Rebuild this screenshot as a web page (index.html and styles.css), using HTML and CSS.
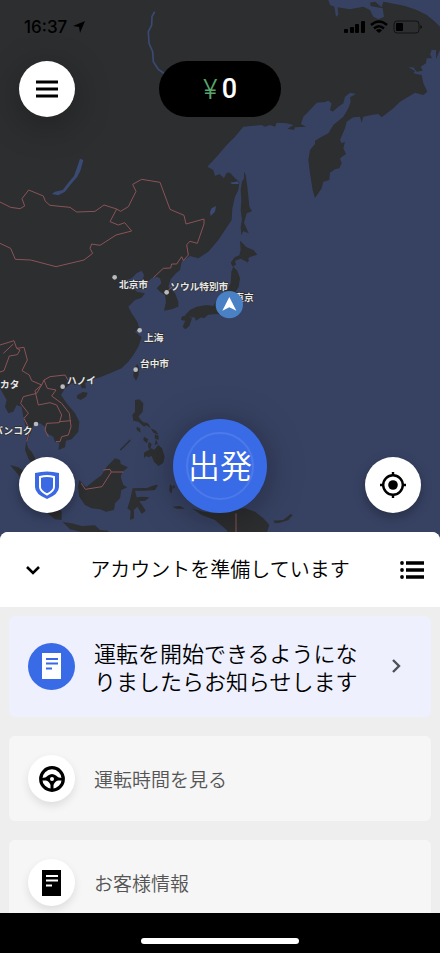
FILE: index.html
```html
<!DOCTYPE html>
<html lang="ja">
<head>
    <meta charset="UTF-8">
    <meta name="viewport" content="width=device-width, initial-scale=1.0">
    <title>ドライバー</title>
    <link rel="stylesheet" href="styles.css">
</head>
<body>
    <div class="screen">
        <main class="map">
            <svg class="map-canvas" viewBox="0 0 1320 1630" preserveAspectRatio="xMidYMin slice" aria-hidden="true">
                <!-- Mainland -->
                <path class="land" d="M0 0H985L990 15 1003 20 1008 50 1015 45 1013 22 1050 28 1090 20 1110 30 1120 50 1135 58 1152 50 1148 25 1130 22 1112 18 1110 8 1125 5 1145 22 1150 5 1185 12 1215 18 1250 30 1280 45 1305 65 1320 80V150L1308 178 1308 150 1295 150 1290 163 1296 175 1280 175 1278 190 1262 200 1268 212 1250 215 1240 202 1225 202 1245 213 1240 220 1265 225 1270 250 1282 275 1270 285 1245 278 1225 290 1200 305 1180 325 1145 352 1135 342 1115 345 1090 350 1085 368 1080 350 1060 352 1040 365 1035 385 1020 420 1025 430 1035 425 1030 445 1038 462 1020 475 1025 490 1018 505 1005 508 990 518 988 540 970 545 965 565 945 594 938 570 930 520 925 480 930 450 945 432 945 422 965 410 985 400 1000 375 1030 350 1045 325 1052 305 1050 292 1068 282 1050 278 1035 290 1030 310 1015 320 998 335 990 330 995 310 985 302 975 306 950 308 930 330 910 350 903 372 918 380 885 382 882 390 862 386 880 375 860 370 830 368 825 380 810 375 795 380 785 375 730 380 705 410 680 435 650 470 622 500 640 510 645 528 658 522 672 534 680 518 690 518 705 535 718 545 715 570 705 590 697 625 695 660 675 690 655 720 625 755 595 775 570 768 545 785 540 810 528 820 512 838 505 860 525 880 535 905 535 920 515 928 492 932 498 905 495 885 480 875 470 865 484 850 480 835 470 830 455 835 440 848 425 850 432 825 425 812 410 820 395 835 380 840 382 858 400 862 410 875 435 880 425 893 405 900 385 920 395 940 412 965 418 985 405 995 425 1012 415 1040 400 1065 385 1085 365 1105 330 1120 300 1132 270 1140 255 1150 258 1165 245 1165 240 1148 215 1150 195 1165 183 1185 200 1210 225 1240 238 1265 235 1295 215 1318 198 1322 195 1342 175 1350 178 1330 165 1325 160 1310 140 1300 135 1280 120 1270 100 1275 92 1300 80 1330 85 1345 95 1355 105 1375 115 1400 100 1400 85 1375 75 1350 78 1330 82 1300 70 1250 65 1220 50 1215 40 1235 25 1240 15 1220 20 1200 0 1165Z"/>
                <!-- Sakhalin, Hokkaido -->
                <path class="land" d="M732 515 737 525 742 560 745 590 748 620 756 634 740 640 732 668 746 700 730 694 724 706 722 680 726 660 722 630 724 600 722 570 726 545 732 535ZM720 722 740 742 760 750 772 764 748 772 740 785 722 776 705 782 708 794 698 800 692 788 704 772 718 766 722 750Z"/>
                <!-- Honshu, Shikoku, Kyushu -->
                <path class="land" d="M700 800 712 812 720 835 716 860 704 880 700 900 690 925 672 945 650 942 625 944 612 955 596 950 575 952 555 945 570 930 590 920 620 915 640 918 650 900 665 890 680 870 692 850 694 815ZM735 778 748 780 742 788ZM582 948 600 936 612 942 600 954 588 962ZM545 950 560 945 576 955 568 978 556 988 548 980 556 962 543 960Z"/>
                <!-- Taiwan, Hainan, Luzon, Visayas, Mindanao -->
                <path class="land" d="M412 1092 418 1105 415 1128 408 1142 400 1128 402 1105ZM232 1185 248 1176 263 1178 258 1190 242 1200 230 1194ZM405 1200 418 1198 430 1210 428 1235 415 1250 425 1262 440 1275 432 1280 415 1265 400 1262 397 1245 405 1235ZM410 1280 420 1285 422 1298 410 1290ZM432 1265 446 1272 452 1285 438 1275ZM452 1285 468 1292 476 1304 460 1298ZM432 1310 445 1318 440 1330 430 1320ZM446 1325 455 1332 450 1350 444 1340ZM465 1302 476 1308 475 1320 464 1315ZM468 1318 474 1332 464 1335ZM390 1318 392 1322 362 1352 360 1348ZM432 1358 455 1345 462 1350 475 1335 486 1345 494 1370 490 1388 476 1398 462 1385 455 1368 445 1372 438 1368 432 1375Z"/>
                <!-- Borneo, Sulawesi -->
                <path class="land" d="M238 1440 258 1462 285 1440 305 1425 320 1400 345 1375 360 1380 362 1392 384 1402 368 1415 362 1430 370 1455 382 1462 364 1470 360 1495 345 1510 342 1530 318 1535 300 1528 275 1525 255 1515 238 1490 234 1460ZM398 1465 440 1464 468 1454 474 1456 465 1470 435 1472 405 1472 410 1492 430 1490 448 1492 436 1502 418 1504 428 1518 437 1532 425 1542 412 1520 402 1530 402 1555 390 1560 392 1532 382 1525 390 1500Z"/>
                <!-- Sumatra, Java, Moluccas, New Guinea -->
                <path class="land" d="M30 1395 55 1402 80 1420 120 1465 160 1510 185 1535 185 1560 165 1558 130 1530 90 1480 60 1430ZM188 1566 215 1570 245 1578 285 1576 300 1590 325 1592 325 1602 260 1600 210 1588ZM510 1452 518 1460 514 1482 508 1472ZM520 1455 526 1460 520 1466ZM518 1520 540 1518 555 1526 530 1526ZM575 1525 610 1535 650 1540 700 1528 735 1525 765 1535 790 1555 808 1575 800 1600 820 1630H660L690 1610 680 1590 645 1560 605 1545ZM820 1562 850 1560 872 1542 878 1545 865 1560 840 1568 825 1570Z"/>
                <!-- Lakes and rivers -->
                <path class="water" d="M240 476 250 480 242 510 232 530 215 550 195 575 175 586 155 582 165 575 188 570 205 548 222 528 232 500ZM635 625 648 618 645 635 632 648 630 635Z"/>
                <path class="river" d="M464 35 456 50 455 75 445 95 447 130 458 155 460 185 475 208 495 222"/>
                <path class="water" d="M690 548 715 544 716 552 696 552Z"/>
                <!-- National borders -->
                <g class="border">
                    <path d="M0 606 32 622 60 626 74 618 66 596 86 570 130 588 136 604 150 616 210 622 230 636 285 634 312 615 350 627 330 665 355 675 374 668 395 693 348 705 300 736 275 732 270 745 278 760 252 780 168 800 92 780 46 778 32 745 0 730"/>
                    <path d="M350 627 362 634 385 620 408 574 398 553 425 538 480 547 510 628 552 646 558 672 612 657 612 672 592 730 570 724 560 734 565 765 550 782 545 770 530 792 515 792 512 804 490 805 460 833M505 870 520 858"/>
                    <path d="M0 1035 42 1022 50 1045 72 1042 82 1080 66 1112 88 1125 95 1142 125 1155 132 1140 150 1130 195 1125 204 1140M10 1060 40 1032M50 1045 60 1050 52 1064 28 1068 12 1112 0 1116M125 1155 110 1180 70 1190 62 1210 85 1240 72 1255 90 1290 80 1325M125 1155 105 1172 115 1215 150 1208 170 1215 185 1245 178 1268 140 1270 135 1290 145 1310M132 1140 142 1165 168 1170 155 1188 185 1210 208 1240 213 1280 205 1305 185 1310 180 1325 168 1325M178 1265 213 1262"/>
                    <path d="M244 1450 256 1468 306 1460 334 1416 370 1416M310 1410 330 1408 334 1416M708 1540V1630"/>
                </g>
                <!-- Cities -->
                <g class="dots">
                    <circle cx="344" cy="832" r="7"/>
                    <circle cx="500" cy="877" r="7"/>
                    <circle cx="419" cy="991" r="7"/>
                    <circle cx="407" cy="1109" r="7"/>
                    <circle cx="188" cy="1160" r="7"/>
                    <circle cx="108" cy="1272" r="7"/>
                </g>
                <g class="cities">
                    <text x="357" y="863">北京市</text>
                    <text x="511" y="869">ソウル特別市</text>
                    <text x="703" y="904">東京</text>
                    <text x="432" y="1022">上海</text>
                    <text x="420" y="1102">台中市</text>
                    <text x="201" y="1152">ハノイ</text>
                    <text x="0" y="1163">カタ</text>
                    <text x="-20" y="1303">バンコク</text>
                </g>
                <!-- Current position -->
                <circle class="position" cx="688" cy="914" r="41"/>
                <path class="arrow" d="M688 891 709 932 688 922 667 932Z"/>
            </svg>

            <div class="status-bar">
                <div class="clock">
                    <span>16:37</span>
                    <svg width="14" height="14" viewBox="0 0 14 14"><path d="M13 1 8 13 7 7 1 6Z"/></svg>
                </div>
                <div class="signals">
                    <svg width="21" height="14" viewBox="0 0 21 14">
                        <rect x="0" y="9" width="4" height="4" rx="1"/>
                        <rect x="6" y="7" width="4" height="6" rx="1"/>
                        <rect x="11" y="4" width="4" height="9" rx="1"/>
                        <rect x="17" y="1" width="4" height="12" rx="1"/>
                    </svg>
                    <svg width="18" height="14" viewBox="0 0 18 14">
                        <path d="M1 5Q9 -2 17 5M4 8.500Q9 4 14 8.500" fill="none" stroke="#000" stroke-width="2.4"/>
                        <path d="M9 13 5.8 10.2Q9 8 12.2 10.2Z"/>
                    </svg>
                    <svg width="30" height="14" viewBox="0 0 30 14">
                        <rect x="1" y="1" width="25" height="12" rx="3" fill="none" stroke="#111214"/>
                        <rect x="3" y="3" width="7" height="8" rx="1"/>
                        <path d="M27.5 5Q30 7 27.5 9Z"/>
                    </svg>
                </div>
            </div>

            <div class="top-controls">
                <button type="button" class="round-button menu-button" aria-label="メニュー">
                    <svg width="22" height="18" viewBox="0 0 22 18"><path d="M0 2H22M0 9H22M0 16H22" stroke="#000" stroke-width="2.8"/></svg>
                </button>
                <button type="button" class="earnings"><span class="yen">¥</span><span>0</span></button>
            </div>

            <div class="bottom-controls">
                <button type="button" class="round-button" aria-label="安全">
                    <svg width="24" height="28" viewBox="0 0 24 28">
                        <path fill="#3a69e3" d="M0 2Q12 -1 24 2V16Q24 23 12 28 0 23 0 16Z"/>
                        <path fill="none" stroke="#fff" stroke-width="2" d="M5 6Q12 4 19 6V16Q19 20 12 23.500 5 20 5 16Z"/>
                    </svg>
                </button>
                <button type="button" class="go-button"><span>出発</span></button>
                <button type="button" class="round-button" aria-label="現在地">
                    <svg width="26" height="26" viewBox="0 0 26 26">
                        <circle cx="13" cy="13" r="9.800" fill="none" stroke="#000" stroke-width="2.4"/>
                        <circle cx="13" cy="13" r="4.800"/>
                        <path d="M13 0V4M13 22V26M0 13H4M22 13H26" stroke="#000" stroke-width="2.4"/>
                    </svg>
                </button>
            </div>
        </main>

        <section class="sheet">
            <header class="sheet-header">
                <button type="button" class="icon-button" aria-label="閉じる">
                    <svg width="14" height="10" viewBox="0 0 14 10"><path d="M1 2 7 8 13 2" fill="none" stroke="#000" stroke-width="2.6"/></svg>
                </button>
                <h1>アカウントを準備しています</h1>
                <button type="button" class="icon-button" aria-label="一覧">
                    <svg width="24" height="18" viewBox="0 0 24 18">
                        <path d="M6 2H24M6 9H24M6 16H24" stroke="#000" stroke-width="3.4"/>
                        <circle cx="2" cy="2" r="1.900"/><circle cx="2" cy="9" r="1.900"/><circle cx="2" cy="16" r="1.900"/>
                    </svg>
                </button>
            </header>

            <div class="cards">
                <a href="#" class="card card-active">
                    <span class="card-icon">
                        <svg width="19" height="26" viewBox="0 0 19 26">
                            <path fill="#fff" d="M0 0H19V26H0Z"/>
                            <path d="M4 6H16M4 10.500H16M4 15.500H10" stroke="#3a69e3" stroke-width="2"/>
                        </svg>
                    </span>
                    <span class="card-text">運転を開始できるようになりましたらお知らせします</span>
                    <svg class="chevron" width="10" height="14" viewBox="0 0 10 14"><path d="M2 1 8 7 2 13" fill="none" stroke="#4f5057" stroke-width="2.4"/></svg>
                </a>
                <a href="#" class="card">
                    <span class="card-icon">
                        <svg width="26" height="26" viewBox="0 0 26 26">
                            <circle cx="13" cy="13" r="11.300" fill="none" stroke="#000" stroke-width="3.2"/>
                            <path d="M2 12Q7 12 9 9.500 13 6.500 17 9.500 19 12 24 12V14.500H19Q16 15 14.500 19V25H11.500V19Q10 15 7 14.500H2Z"/>
                            <circle cx="13" cy="13" r="2" fill="#fff"/>
                        </svg>
                    </span>
                    <span class="card-text">運転時間を見る</span>
                </a>
                <a href="#" class="card">
                    <span class="card-icon">
                        <svg width="19" height="26" viewBox="0 0 19 26">
                            <path d="M0 0H19V26H0Z"/>
                            <path d="M4 6H16M4 10.500H16M4 15.500H10" stroke="#fff" stroke-width="2"/>
                        </svg>
                    </span>
                    <span class="card-text">お客様情報</span>
                </a>
            </div>
        </section>

        <footer class="home-bar"><span></span></footer>
    </div>
</body>
</html>
```

FILE: styles.css
```css
* {
    box-sizing: border-box;
}

body {
    margin: 0;
    font-family: "Noto Sans CJK JP", sans-serif;
    font-weight: 350;
    background-color: #000;
    color: #000;
}

button {
    font-family: inherit;
    font-weight: inherit;
    color: inherit;
    border: none;
    padding: 0;
    cursor: pointer;
}

svg {
    display: block;
}

.screen {
    display: flex;
    flex-direction: column;
    height: 100vh;
    overflow: hidden;
}

/* Map */
.map {
    position: relative;
    flex: none;
    display: flex;
    flex-direction: column;
    height: 57vh;
    background-color: #374263;
}

.map-canvas {
    position: absolute;
    inset: 0;
    width: 100%;
    height: 100%;
}

.land {
    fill: #2c2e2f;
}

.water {
    fill: #3b4a74;
}

.river {
    fill: none;
    stroke: #3b4a74;
    stroke-width: 5;
}

.border {
    fill: none;
    stroke: #8b5358;
    stroke-width: 3;
}

.dots {
    fill: #b9babd;
}

.cities {
    fill: #e6e7ea;
    font-size: 29px;
    font-weight: 700;
    stroke: #2c2e2f;
    stroke-width: 4px;
    paint-order: stroke;
}

.position {
    fill: #4a80c4;
}

.arrow {
    fill: #fff;
}

.status-bar {
    position: relative;
    display: flex;
    justify-content: space-between;
    align-items: center;
    padding: 16px 17px 0 24px;
    height: 38px;
}

.clock,
.signals {
    display: flex;
    align-items: center;
    gap: 5px;
}

.clock {
    font-family: Inter, sans-serif;
    font-size: 17px;
    font-weight: 500;
}

.top-controls {
    position: relative;
    display: grid;
    grid-template-columns: 1fr auto 1fr;
    padding: 23px 19px 0;
}

.round-button {
    display: flex;
    align-items: center;
    justify-content: center;
    width: 56px;
    height: 56px;
    border-radius: 50%;
    background-color: #fff;
    box-shadow: 0 4px 12px rgba(0, 0, 0, 0.3);
}

.menu-button {
    box-shadow: 0 8px 36px rgba(0, 0, 0, 0.3);
}

.earnings {
    display: flex;
    align-items: center;
    justify-content: center;
    gap: 4px;
    width: 122px;
    height: 56px;
    border-radius: 28px;
    background-color: #000;
    color: #fff;
    font-family: Roboto, sans-serif;
    font-size: 27px;
    font-weight: 500;
}

.yen {
    color: #58a56c;
    font-family: Inter, sans-serif;
    font-weight: 300;
}

.bottom-controls {
    position: relative;
    display: flex;
    justify-content: space-between;
    align-items: flex-end;
    margin-top: auto;
    padding: 0 19px 30px;
}

.go-button {
    display: grid;
    place-items: center;
    width: 94px;
    height: 94px;
    border-radius: 50%;
    background-color: #3a6be6;
    box-shadow: 0 4px 36px rgba(0, 0, 0, 0.35);
    color: #fff;
    font-size: 32px;
    line-height: 60px;
}

.go-button span {
    width: 68px;
    height: 68px;
    border: 2px solid #4d7aeb;
    border-radius: 50%;
}

/* Sheet */
.sheet {
    position: relative;
    flex: 1;
    min-height: 0;
    margin-top: -11px;
    overflow: hidden;
    border-radius: 8px 8px 0 0;
    background-color: #eee;
}

.sheet-header {
    display: flex;
    align-items: center;
    justify-content: space-between;
    height: 75px;
    padding: 0 16px;
    background-color: #fff;
}

.sheet-header h1 {
    margin: 0;
    padding-bottom: 2px;
    font-size: 20px;
    font-weight: inherit;
}

.icon-button {
    display: grid;
    place-items: center;
    width: 24px;
    height: 24px;
    background: none;
}

.icon-button:first-child {
    width: 34px;
    margin-right: -10px;
}

.cards {
    display: flex;
    flex-direction: column;
    gap: 19px;
    padding: 9px;
}

.card {
    display: flex;
    align-items: center;
    gap: 19px;
    padding: 19px;
    border-radius: 6px;
    background-color: #f6f6f6;
    color: #555;
    font-size: 19px;
    line-height: 28px;
    text-decoration: none;
}

.card-active {
    padding: 22px 30px 23px 19px;
    background-color: #eef0fd;
    color: #000;
    font-size: 22px;
}

.card-icon {
    flex: none;
    display: grid;
    place-items: center;
    width: 47px;
    height: 47px;
    border-radius: 50%;
    background-color: #fff;
    box-shadow: 0 4px 8px rgba(0, 0, 0, 0.1);
}

.card-active .card-icon {
    background-color: #3a6be6;
    box-shadow: none;
}

.card-text {
    flex: 1;
}

.card-active .card-text {
    margin-right: 12px;
}

.home-bar {
    flex: none;
    display: flex;
    justify-content: center;
    align-items: flex-end;
    height: 40px;
    padding-bottom: 9px;
    background-color: #000;
}

.home-bar span {
    width: 36%;
    height: 6px;
    border-radius: 3px;
    background-color: #fff;
}
```
